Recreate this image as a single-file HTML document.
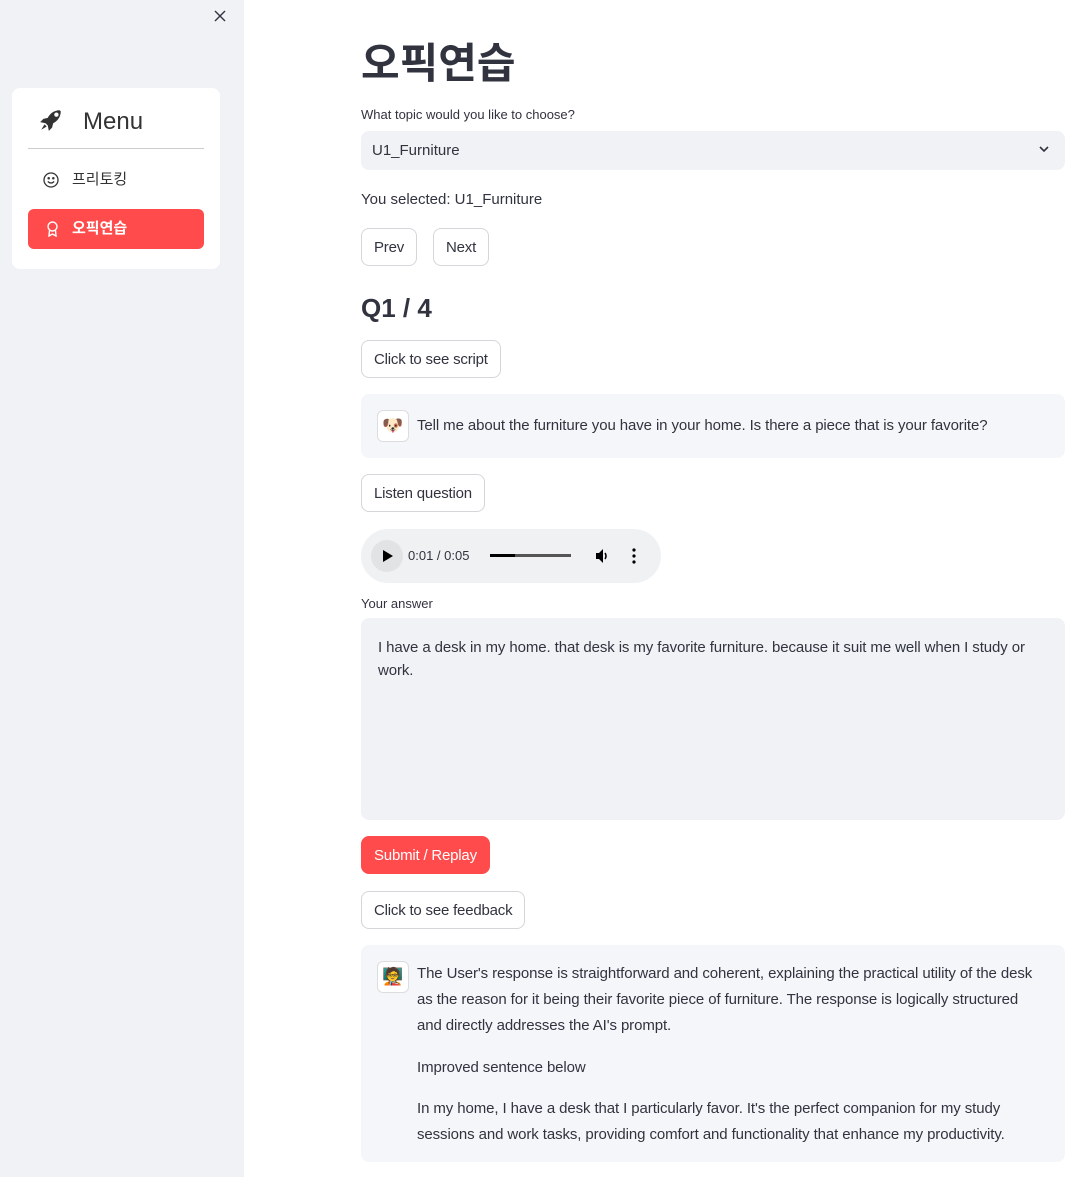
<!DOCTYPE html>
<html><head><meta charset="utf-8"><style>
*{box-sizing:border-box;margin:0;padding:0}
body{width:1081px;height:1177px;overflow:hidden;background:#fff;font-family:"Liberation Sans","Noto Sans CJK KR",sans-serif;color:#31333f;position:relative}
.side{position:absolute;left:0;top:0;width:244px;height:1177px;background:#f0f2f6}
.menu{position:absolute;left:12px;top:88px;width:208px;height:181px;background:#fff;border-radius:8px}
.mh{position:absolute;left:16px;top:12px;width:176px;height:49px;border-bottom:1px solid #ccc}
.mh span{position:absolute;left:55px;top:8px;font-size:24px;color:#333}
.mi{position:absolute;left:16px;width:176px;height:40px;border-radius:6px;font-size:15px;padding-left:44px;line-height:40px}
.main{position:absolute;left:361px;width:704px}
h1{position:absolute;left:361px;top:30px;font-size:42px;font-weight:700;color:#31333f}
.lbl{font-size:13px}
.btn{position:absolute;height:38px;border:1px solid #d5d6da;border-radius:8px;font-size:15px;line-height:38px;padding:0 12px;background:#fff;letter-spacing:-0.2px}
.chat{position:absolute;left:361px;width:704px;background:#f5f6fa;border-radius:8px}
.av{position:absolute;left:16px;width:32px;height:32px;border:1px solid #ddd;border-radius:6px;background:#fff;text-align:center;line-height:30px;font-size:17px}
.ct{position:absolute;left:56px;right:22px;font-size:15px;line-height:26px;letter-spacing:-0.1px}
</style></head><body>
<div class="side">
<svg style="position:absolute;left:214px;top:10px" width="12" height="12" viewBox="0 0 12 12" stroke="#31333f" stroke-width="1.4"><path d="M1 1L11 11M11 1L1 11"/></svg>
<div class="menu">
<div class="mh"><svg style="position:absolute;left:10px;top:7px" width="26" height="26" viewBox="0 0 24 24" fill="#333"><path d="M20 3c-5 0-9 3-11 7l-4 1-3 3 5 1 2 2 1 5 3-3 1-4c4-2 7-6 7-11zM15 7a2 2 0 110 .1zM6 16l-3 5 5-3z"/></svg><span>Menu</span></div>
<div class="mi" style="top:72px;color:#333"><svg style="position:absolute;left:15px;top:12px" width="16" height="16" viewBox="0 0 16 16" fill="none" stroke="#333" stroke-width="1.3"><circle cx="8" cy="8" r="7"/><circle cx="5.7" cy="6.3" r=".6" fill="#333"/><circle cx="10.3" cy="6.3" r=".6" fill="#333"/><path d="M4.8 9.5q3.2 3 6.4 0"/></svg>프리토킹</div>
<div class="mi" style="top:121px;background:#ff4b4b;color:#fff;font-weight:700"><svg style="position:absolute;left:18px;top:12px" width="13" height="16" viewBox="0 0 13 16" fill="none" stroke="#fff" stroke-width="1.4"><circle cx="6.5" cy="5.5" r="4.5"/><path d="M3.5 9.5L3 15l3.5-2 3.5 2-.5-5.5"/></svg>오픽연습</div>
</div>
</div>
<h1>오픽연습</h1>
<div class="main lbl" style="top:107px">What topic would you like to choose?</div>
<div class="main" style="top:131px;height:39px;background:#f0f2f6;border-radius:8px;font-size:15px;line-height:40px;padding-left:11px">U1_Furniture<svg style="position:absolute;right:16px;top:15px" width="10" height="7" viewBox="0 0 10 7" fill="none" stroke="#31333f" stroke-width="1.6"><path d="M1 1l4 4 4-4"/></svg></div>
<div class="main" style="top:191px;font-size:15px">You selected: U1_Furniture</div>
<div class="btn" style="left:361px;top:228px">Prev</div>
<div class="btn" style="left:433px;top:228px">Next</div>
<div class="main" style="top:293px;font-size:26px;font-weight:700">Q1 / 4</div>
<div class="btn" style="left:361px;top:340px">Click to see script</div>
<div class="chat" style="top:394px;height:64px"><div class="av" style="top:16px">🐶</div><div class="ct" style="top:19px">Tell me about the furniture you have in your home. Is there a piece that is your favorite?</div></div>
<div class="btn" style="left:361px;top:474px">Listen question</div>
<div style="position:absolute;left:361px;top:529px;width:300px;height:54px;border-radius:27px;background:#f0f1f2;font-size:13px">
<div style="position:absolute;left:10px;top:11px;width:32px;height:32px;border-radius:16px;background:#e2e3e5"></div>
<div style="position:absolute;left:22px;top:21px;border-left:10px solid #000;border-top:6px solid transparent;border-bottom:6px solid transparent"></div>
<span style="position:absolute;left:47px;top:19px">0:01 / 0:05</span>
<div style="position:absolute;left:129px;top:25px;width:81px;height:3px;background:#555"><div style="width:25px;height:3px;background:#000"></div></div>
<svg style="position:absolute;left:234px;top:19px" width="16" height="16" viewBox="0 0 16 16" fill="#000"><path d="M1 5h3l4-4v14l-4-4H1z"/><path d="M10 5q2 3 0 6" fill="none" stroke="#000" stroke-width="1.6"/></svg>
<svg style="position:absolute;left:271px;top:19px" width="4" height="16" viewBox="0 0 4 16" fill="#000"><circle cx="2" cy="2" r="1.6"/><circle cx="2" cy="8" r="1.6"/><circle cx="2" cy="14" r="1.6"/></svg>
</div>
<div class="main lbl" style="top:596px">Your answer</div>
<div class="main" style="top:618px;height:202px;background:#f0f2f6;border-radius:8px;padding:18px 17px;font-size:15px;line-height:23px;letter-spacing:-0.1px">I have a desk in my home. that desk is my favorite furniture. because it suit me well when I study or work.</div>
<div class="btn" style="left:361px;top:836px;background:#ff4b4b;color:#fff;border-color:#ff4b4b">Submit / Replay</div>
<div class="btn" style="left:361px;top:891px">Click to see feedback</div>
<div class="chat" style="top:945px;height:217px"><div class="av" style="top:16px">🧑‍🏫</div>
<div class="ct" style="top:16px">The User's response is straightforward and coherent, explaining the practical utility of the desk as the reason for it being their favorite piece of furniture. The response is logically structured and directly addresses the AI's prompt.<p style="margin-top:16px">Improved sentence below</p><p style="margin-top:15px">In my home, I have a desk that I particularly favor. It's the perfect companion for my study sessions and work tasks, providing comfort and functionality that enhance my productivity.</p></div></div>
</body></html>
